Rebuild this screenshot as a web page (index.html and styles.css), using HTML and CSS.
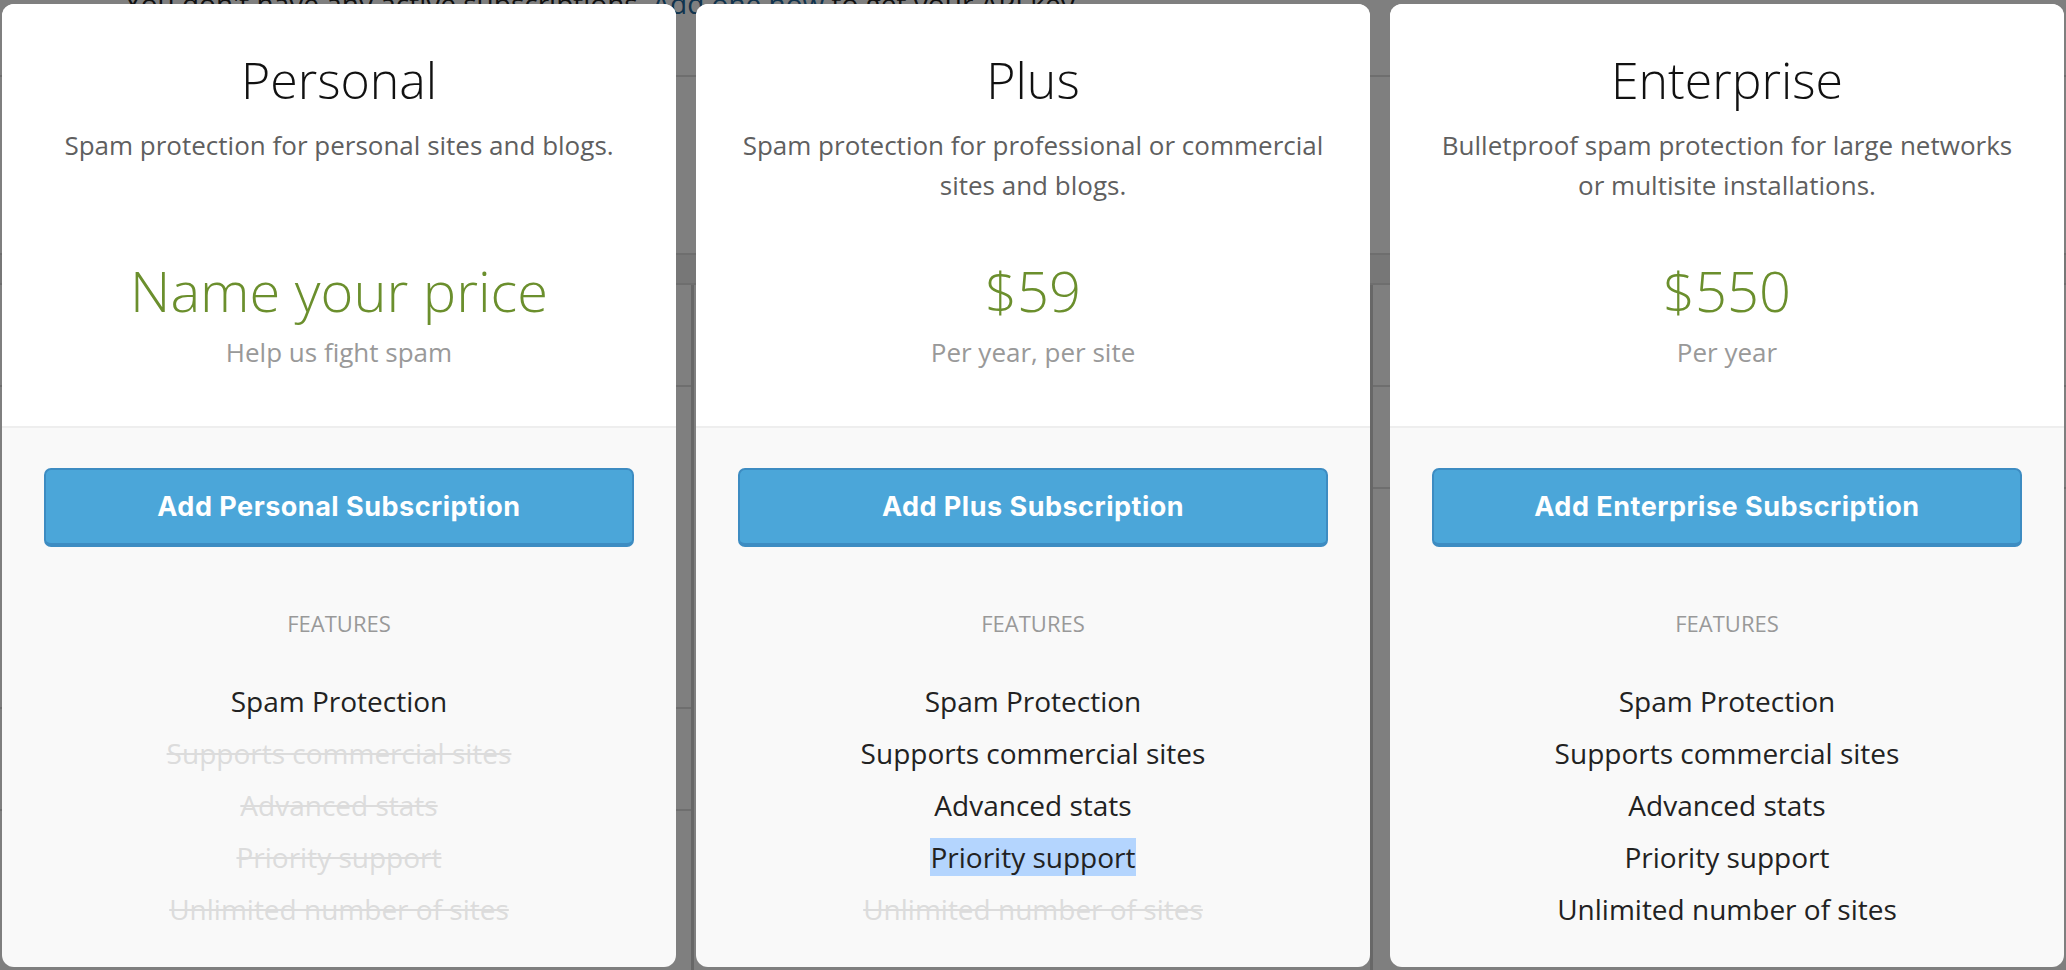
FILE: index.html
```html
<!DOCTYPE html>
<html lang="en">
<head>
<meta charset="utf-8">
<title>Choose a subscription</title>
<link rel="stylesheet" href="styles.css">
</head>
<body>
<div class="page">
  <p class="notice">You don't have any active subscriptions. <a href="#">Add one now</a> to get your API key.</p>
  <div class="section-head"></div>
  <div class="band"></div>
  <div class="tables">
    <div class="box box-left">
      <div class="row"></div>
      <div class="row tall"></div>
      <div class="row"></div>
    </div>
    <div class="gap-col"><span class="dash"></span></div>
    <div class="box box-right">
      <div class="row"></div>
      <div class="row"></div>
    </div>
  </div>
</div>
<div class="overlay"></div>

<div class="modal">
  <div class="plans">
    <section class="card">
      <div class="card-top">
        <h2 class="title">Personal</h2>
        <p class="desc">Spam protection for personal sites and blogs.</p>
        <div class="price">Name your price</div>
        <div class="price-note">Help us fight spam</div>
      </div>
      <div class="card-bottom">
        <button class="btn" type="button">Add Personal Subscription</button>
        <div class="features-label">FEATURES</div>
        <ul class="features">
          <li>Spam Protection</li>
          <li class="off">Supports commercial sites</li>
          <li class="off">Advanced stats</li>
          <li class="off">Priority support</li>
          <li class="off">Unlimited number of sites</li>
        </ul>
      </div>
    </section>

    <section class="card">
      <div class="card-top">
        <h2 class="title">Plus</h2>
        <p class="desc">Spam protection for professional or commercial<br>sites and blogs.</p>
        <div class="price">$59</div>
        <div class="price-note">Per year, per site</div>
      </div>
      <div class="card-bottom">
        <button class="btn" type="button">Add Plus Subscription</button>
        <div class="features-label">FEATURES</div>
        <ul class="features">
          <li>Spam Protection</li>
          <li>Supports commercial sites</li>
          <li>Advanced stats</li>
          <li><span class="selected">Priority support</span></li>
          <li class="off">Unlimited number of sites</li>
        </ul>
      </div>
    </section>

    <section class="card">
      <div class="card-top">
        <h2 class="title">Enterprise</h2>
        <p class="desc">Bulletproof spam protection for large networks<br>or multisite installations.</p>
        <div class="price">$550</div>
        <div class="price-note">Per year</div>
      </div>
      <div class="card-bottom">
        <button class="btn" type="button">Add Enterprise Subscription</button>
        <div class="features-label">FEATURES</div>
        <ul class="features">
          <li>Spam Protection</li>
          <li>Supports commercial sites</li>
          <li>Advanced stats</li>
          <li>Priority support</li>
          <li>Unlimited number of sites</li>
        </ul>
      </div>
    </section>
  </div>
</div>
</body>
</html>
```

FILE: styles.css
```css
* { box-sizing: border-box; }

html, body {
  margin: 0;
  padding: 0;
  width: 2066px;
  height: 970px;
  overflow: hidden;
  font-family: "Open Sans", "Noto Sans", sans-serif;
}

/* ---------- underlying page (dimmed) ---------- */
.page {
  position: absolute;
  inset: 0;
  background: #ffffff;
  overflow: hidden;
}

.notice {
  margin: -17px 0 0 125px;
  font-size: 28px;
  line-height: 40px;
  color: #222222;
  white-space: nowrap;
}

.notice a {
  color: #22689c;
  text-decoration: none;
}

.section-head {
  margin-top: 52px;
  height: 178px;
  border-top: 2px solid #dddddd;
}

.band {
  height: 32px;
  background: #eeeeee;
  border-top: 2px solid #dddddd;
  border-bottom: 2px solid #dddddd;
}

.tables {
  display: flex;
  height: 700px;
}

.box-left {
  width: 694px;
  border-right: 3px solid #cfcfcf;
}

.gap-col {
  width: 676px;
  padding-top: 195px;
  display: flex;
  justify-content: flex-end;
  align-items: flex-start;
}

.dash {
  display: block;
  width: 18px;
  height: 4px;
  background: #000000;
}

.box-right {
  flex: 1;
  border-left: 3px solid #cfcfcf;
}

.row {
  height: 102px;
  border-bottom: 2px solid #dddddd;
}

.row.tall {
  height: 322px;
}

.overlay {
  position: absolute;
  inset: 0;
  background: rgba(0, 0, 0, 0.5);
}

/* ---------- modal ---------- */
.modal {
  position: absolute;
  top: 4px;
  left: 2px;
  right: 2px;
}

.plans {
  display: flex;
  gap: 20px;
}

.card {
  width: 674px;
  border-radius: 12px;
  overflow: hidden;
  background: #f9f9f9;
  text-align: center;
}

.card-top {
  height: 424px;
  padding: 48px 36px 0;
  background: #ffffff;
  border-bottom: 2px solid #eeeeee;
}

.title {
  margin: 0;
  font-size: 50px;
  line-height: 56px;
  font-weight: 300;
  color: #111111;
}

.desc {
  margin: 17px 0 0;
  min-height: 80px;
  font-size: 26px;
  line-height: 40px;
  color: #5f5f5f;
  white-space: nowrap;
}

.price {
  margin-top: 53px;
  font-size: 56px;
  line-height: 64px;
  font-weight: 300;
  color: #6b8f2d;
}

.price-note {
  margin-top: 10px;
  font-size: 26px;
  line-height: 40px;
  color: #999999;
}

.card-bottom {
  padding: 40px 42px 32px;
}

.btn {
  display: block;
  width: 100%;
  height: 79px;
  margin: 0;
  padding: 0;
  border: 2px solid #3d8cc2;
  border-bottom-width: 4px;
  border-radius: 7px;
  background: #4ba6d9;
  color: #ffffff;
  font-family: Inter, "Liberation Sans", sans-serif;
  font-weight: 700;
  font-size: 27px;
  letter-spacing: 0.5px;
  line-height: 73px;
  cursor: pointer;
}

.features-label {
  margin-top: 62px;
  font-size: 22px;
  line-height: 28px;
  color: #999999;
}

.features {
  list-style: none;
  margin: 38px 0 0;
  padding: 0;
}

.features li {
  font-size: 28px;
  line-height: 52px;
  color: #222222;
}

.features li.off {
  color: #dcdcdc;
  text-decoration: line-through;
}

.selected {
  background: #b4d5fe;
}
```
